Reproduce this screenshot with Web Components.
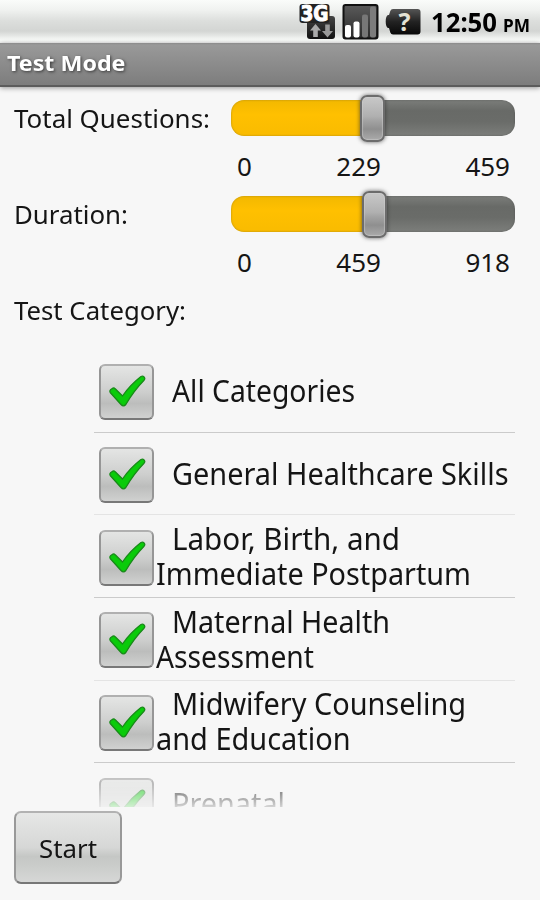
<!DOCTYPE html>
<html lang="en">
<head>
<meta charset="utf-8">
<title>Test Mode</title>
<style>
    html, body {
        margin: 0;
        height: 900px;
        overflow: hidden;
        background: #f7f7f7;
        font-family: "Noto Sans", "Open Sans", sans-serif;
        color: #151515;
    }
</style>
</head>
<body>
<test-screen></test-screen>

<script>
// Single line of text condensed to a given width
class FitLine extends HTMLElement {
    connectedCallback() {
        this.attachShadow({ mode: 'open' });
        this.shadowRoot.innerHTML = `
            <style>
                :host { display: block; white-space: nowrap; }
                span { display: inline-block; transform-origin: 0 50%; }
            </style>
            <span><slot></slot></span>
        `;
        const span = this.shadowRoot.querySelector('span');
        const width = Number(this.getAttribute('width'));
        this.style.width = width + 'px';
        span.style.transform = `scaleX(${width / span.getBoundingClientRect().width})`;
    }
}

class StatusBar extends HTMLElement {
    connectedCallback() {
        this.attachShadow({ mode: 'open' });
        this.shadowRoot.innerHTML = `
            <style>
                :host {
                    display: flex;
                    align-items: center;
                    height: 43px;
                    box-sizing: border-box;
                    padding-left: 298px;
                    background: linear-gradient(#fafcfa 0, #f0f2f0 10px, #dcdedc 21px, #d3d5d3 31px, #e6e8e6 36px, #f8faf8 40px, #f6f6f6 43px);
                    color: #000;
                    font-weight: bold;
                }
                svg { display: block; flex: none; }
                .signal { margin-left: 6px; }
                .battery { margin-left: 6px; }
                .clock {
                    display: flex;
                    align-items: baseline;
                    gap: 6px;
                    margin-left: 9px;
                    padding-top: 3px;
                    font-size: 26px;
                    line-height: 40px;
                }
                .clock .ampm { font-size: 17.5px; }
            </style>
            <svg width="38" height="43" viewBox="0 0 38 43">
                <defs>
                    <linearGradient id="d" x1="0" y1="0" x2="0" y2="1">
                        <stop offset="0" stop-color="#444"/><stop offset="1" stop-color="#111"/>
                    </linearGradient>
                </defs>
                <rect x="9" y="16" width="28" height="23" rx="3" fill="url(#d)"/>
                <rect x="1.500" y="4" width="30" height="19" rx="3" fill="#222"/>
                <text x="2.500" y="20.800" font-family="DejaVu Sans" font-weight="bold" font-size="20.500" textLength="28" lengthAdjust="spacingAndGlyphs" fill="#fff" stroke="#fff" stroke-width="1.100">3G</text>
                <path d="M17.500 24l5.500 6.500h-3.200v6.500h-4.600v-6.500h-3.200z" fill="#aaa"/>
                <path d="M29.500 37.500l-5.500-6.500h3.200v-6.500h4.600v6.500h3.200z" fill="#999"/>
            </svg>
            <svg class="signal" width="37" height="43" viewBox="0 0 37 43">
                <defs>
                    <linearGradient id="s" x1="0" y1="0" x2="0" y2="1">
                        <stop offset="0" stop-color="#5a5a5a"/><stop offset="1" stop-color="#2a2a2a"/>
                    </linearGradient>
                </defs>
                <rect x="1.500" y="5" width="34" height="33.500" rx="2" fill="url(#s)" stroke="#111" stroke-width="2"/>
                <rect x="3" y="25" width="6" height="12.500" rx="2" fill="#fff"/>
                <rect x="11.500" y="21.500" width="6" height="16" rx="2" fill="#fff"/>
                <rect x="20" y="14.500" width="6" height="23" rx="2" fill="#777"/>
                <rect x="28" y="6.500" width="6" height="31" rx="2" fill="#7c7c7c"/>
            </svg>
            <svg class="battery" width="37" height="43" viewBox="0 0 37 43">
                <defs>
                    <linearGradient id="b" x1="0" y1="0" x2="0" y2="1">
                        <stop offset="0" stop-color="#555"/><stop offset=".5" stop-color="#222"/><stop offset="1" stop-color="#080808"/>
                    </linearGradient>
                </defs>
                <path d="M8 9h24.500q3 0 3 3v19.500q0 3-3 3h-24.500q-2 0-2.700-2l-1.300-4.500h-1q-2.300-1.200-2.300-6.500t2.300-6.500h1l1.300-4q.700-2 2.700-2z" fill="url(#b)"/>
                <text x="19.500" y="30.500" text-anchor="middle" font-family="Noto Sans" font-weight="bold" font-size="25" fill="#e4e2d4">?</text>
            </svg>
            <div class="clock">
                <fit-line width="66">12:50</fit-line>
                <fit-line class="ampm" width="27">PM</fit-line>
            </div>
        `;
    }
}

class TitleBar extends HTMLElement {
    connectedCallback() {
        this.attachShadow({ mode: 'open' });
        this.shadowRoot.innerHTML = `
            <style>
                :host {
                    display: block;
                    height: 43.5px;
                    box-sizing: border-box;
                    padding-left: 7px;
                    border-bottom: 2px solid #5c5c5c;
                    background: linear-gradient(#8a8a8a 0, #999 2px, #7d7d7d 100%);
                    box-shadow: 0 1px 5px rgba(0, 0, 0, 0.4);
                    color: #fff;
                    font-size: 22px;
                    font-weight: bold;
                    line-height: 39px;
                    text-shadow: 1px 1px 3px rgba(0, 0, 0, 0.6);
                }
            </style>
            <fit-line width="118.5"><slot></slot></fit-line>
        `;
    }
}

class RangeSlider extends HTMLElement {
    connectedCallback() {
        const at = this.getAttribute('at');
        this.attachShadow({ mode: 'open' });
        this.shadowRoot.innerHTML = `
            <style>
                :host { display: block; width: 284px; }
                .bar {
                    display: flex;
                    align-items: center;
                    height: 48px;
                }
                .track {
                    position: relative;
                    flex: 1;
                    height: 36px;
                    border-radius: 13px;
                    background: linear-gradient(90deg, #ffc000 ${at}px, transparent ${at}px),
                        linear-gradient(#7b7d7a 0, #686a67 30%, #6a6c69 60%, #7c7e7b 100%);
                    box-shadow: inset 0 0 2px rgba(60, 60, 60, 0.5);
                }
                .shade {
                    width: ${at}px;
                    height: 100%;
                    border-radius: 13px 0 0 13px;
                    background: linear-gradient(rgba(205, 160, 0, 0.25), rgba(255, 200, 0, 0) 40%, rgba(215, 160, 0, 0.15));
                }
                .thumb {
                    position: absolute;
                    left: ${at - 12}px;
                    top: -5px;
                    width: 25px;
                    height: 47px;
                    box-sizing: border-box;
                    border: 2px solid #6c6c6c;
                    border-radius: 7px;
                    background: linear-gradient(#c8c8c8, #b0b0b0 45%, #a3a3a3 55%, #8f8f8f 75%, #aaa);
                    box-shadow: 0 0 4px rgba(40, 40, 40, 0.7), inset 0 0 1px 1px rgba(210, 210, 210, 0.5);
                }
                .values {
                    display: flex;
                    justify-content: space-between;
                    padding: 0 5px 0 6px;
                    font-size: 26px;
                    line-height: 48px;
                }
            </style>
            <div class="bar"><div class="track"><div class="shade"></div><div class="thumb"></div></div></div>
            <div class="values">
                <span>${this.getAttribute('min')}</span>
                <span>${this.getAttribute('value')}</span>
                <span>${this.getAttribute('max')}</span>
            </div>
        `;
    }
}

class SettingRow extends HTMLElement {
    connectedCallback() {
        this.attachShadow({ mode: 'open' });
        this.shadowRoot.innerHTML = `
            <style>
                :host {
                    display: flex;
                    justify-content: space-between;
                    padding: 0 25px 0 14px;
                    font-size: 26px;
                    line-height: 48px;
                }
            </style>
            <slot name="label"></slot>
            <slot></slot>
        `;
    }
}

class CheckRow extends HTMLElement {
    connectedCallback() {
        this.attachShadow({ mode: 'open' });
        this.shadowRoot.innerHTML = `
            <style>
                :host {
                    display: flex;
                    align-items: center;
                    height: 82.7px;
                    box-sizing: border-box;
                    padding-left: 5px;
                    border-bottom: 1.6px solid var(--line, #cbcbcb);
                    font-size: 30px;
                    line-height: 35px;
                }
                .box {
                    flex: none;
                    width: 55px;
                    height: 56px;
                    box-sizing: border-box;
                    margin: 3px 2px 0 0;
                    border: 2px solid #999;
                    border-color: #b0b0b0 #969696 #787878;
                    border-radius: 6px;
                    background: linear-gradient(#e4e5e4, #cdcecd 50%, #bcbdbc 72%, #d0d1d0);
                }
                svg { display: block; }
                .text { min-width: 0; padding-bottom: 0.6px; }
                ::slotted(fit-line:first-child) { margin-left: 16px; }
            </style>
            <div class="box">
                <svg width="51" height="52" viewBox="0 0 51 52">
                    <path d="M9.500 23.800L12 22Q13.200 21.600 14.200 22.800L21.500 30Q29 19 40 10.500Q42.500 9.300 43.800 12.200Q43.800 13.500 42.800 14.500Q33 24.500 24.800 38.500Q22.500 41.200 20 38.500L9.200 26.500Q8.300 25 9.500 23.800Z" fill="#0acb0a" stroke="#188a18" stroke-width="1.300" stroke-linejoin="round"/>
                </svg>
            </div>
            <div class="text"><slot></slot></div>
        `;
    }
}

class CategoryList extends HTMLElement {
    connectedCallback() {
        this.attachShadow({ mode: 'open' });
        this.shadowRoot.innerHTML = `
            <style>
                :host {
                    display: block;
                    height: 457px;
                    margin: 16.5px 25px 0 94px;
                    overflow: hidden;
                    -webkit-mask-image: linear-gradient(#000 415px, transparent 465px);
                    mask-image: linear-gradient(#000 415px, transparent 465px);
                }
                ::slotted(check-row:nth-child(even)) { --line: #e4e4e4; }
            </style>
            <slot></slot>
        `;
    }
}

class PushButton extends HTMLElement {
    connectedCallback() {
        this.attachShadow({ mode: 'open' });
        this.shadowRoot.innerHTML = `
            <style>
                :host { display: block; margin: 4px 0 0 14px; }
                button {
                    display: flex;
                    justify-content: center;
                    align-items: center;
                    width: 108px;
                    height: 73px;
                    padding: 0;
                    border: 2px solid #999;
                    border-color: #b2b2b2 #999 #777;
                    border-radius: 7px;
                    background: linear-gradient(#e6e7e6, #d6d7d6 50%, #c5c7c5 63%, #cccecc 80%, #d6d7d6);
                    color: #151515;
                    font: 26px "Noto Sans", sans-serif;
                    line-height: 40px;
                }
            </style>
            <button><fit-line width="58"><slot></slot></fit-line></button>
        `;
    }
}

class TestScreen extends HTMLElement {
    connectedCallback() {
        this.attachShadow({ mode: 'open' });
        this.shadowRoot.innerHTML = `
            <style>
                :host { display: block; width: 540px; height: 900px; }
                .settings { padding-top: 7px; }
            </style>
            <status-bar></status-bar>
            <title-bar>Test Mode</title-bar>
            <div class="settings">
                <setting-row>
                    <fit-line slot="label" width="196">Total Questions:</fit-line>
                    <range-slider min="0" value="229" max="459" at="141"></range-slider>
                </setting-row>
                <setting-row>
                    <fit-line slot="label" width="114">Duration:</fit-line>
                    <range-slider min="0" value="459" max="918" at="143"></range-slider>
                </setting-row>
                <setting-row>
                    <fit-line slot="label" width="172">Test Category:</fit-line>
                </setting-row>
            </div>
            <category-list>
                <check-row><fit-line width="183">All Categories</fit-line></check-row>
                <check-row><fit-line width="336.5">General Healthcare Skills</fit-line></check-row>
                <check-row><fit-line width="228">Labor, Birth, and</fit-line><fit-line width="315">Immediate Postpartum</fit-line></check-row>
                <check-row><fit-line width="218">Maternal Health</fit-line><fit-line width="158">Assessment</fit-line></check-row>
                <check-row><fit-line width="294">Midwifery Counseling</fit-line><fit-line width="194.5">and Education</fit-line></check-row>
                <check-row><fit-line width="113">Prenatal</fit-line></check-row>
            </category-list>
            <push-button>Start</push-button>
        `;
    }
}

customElements.define('fit-line', FitLine);
customElements.define('status-bar', StatusBar);
customElements.define('title-bar', TitleBar);
customElements.define('range-slider', RangeSlider);
customElements.define('setting-row', SettingRow);
customElements.define('check-row', CheckRow);
customElements.define('category-list', CategoryList);
customElements.define('push-button', PushButton);
customElements.define('test-screen', TestScreen);
</script>
</body>
</html>
